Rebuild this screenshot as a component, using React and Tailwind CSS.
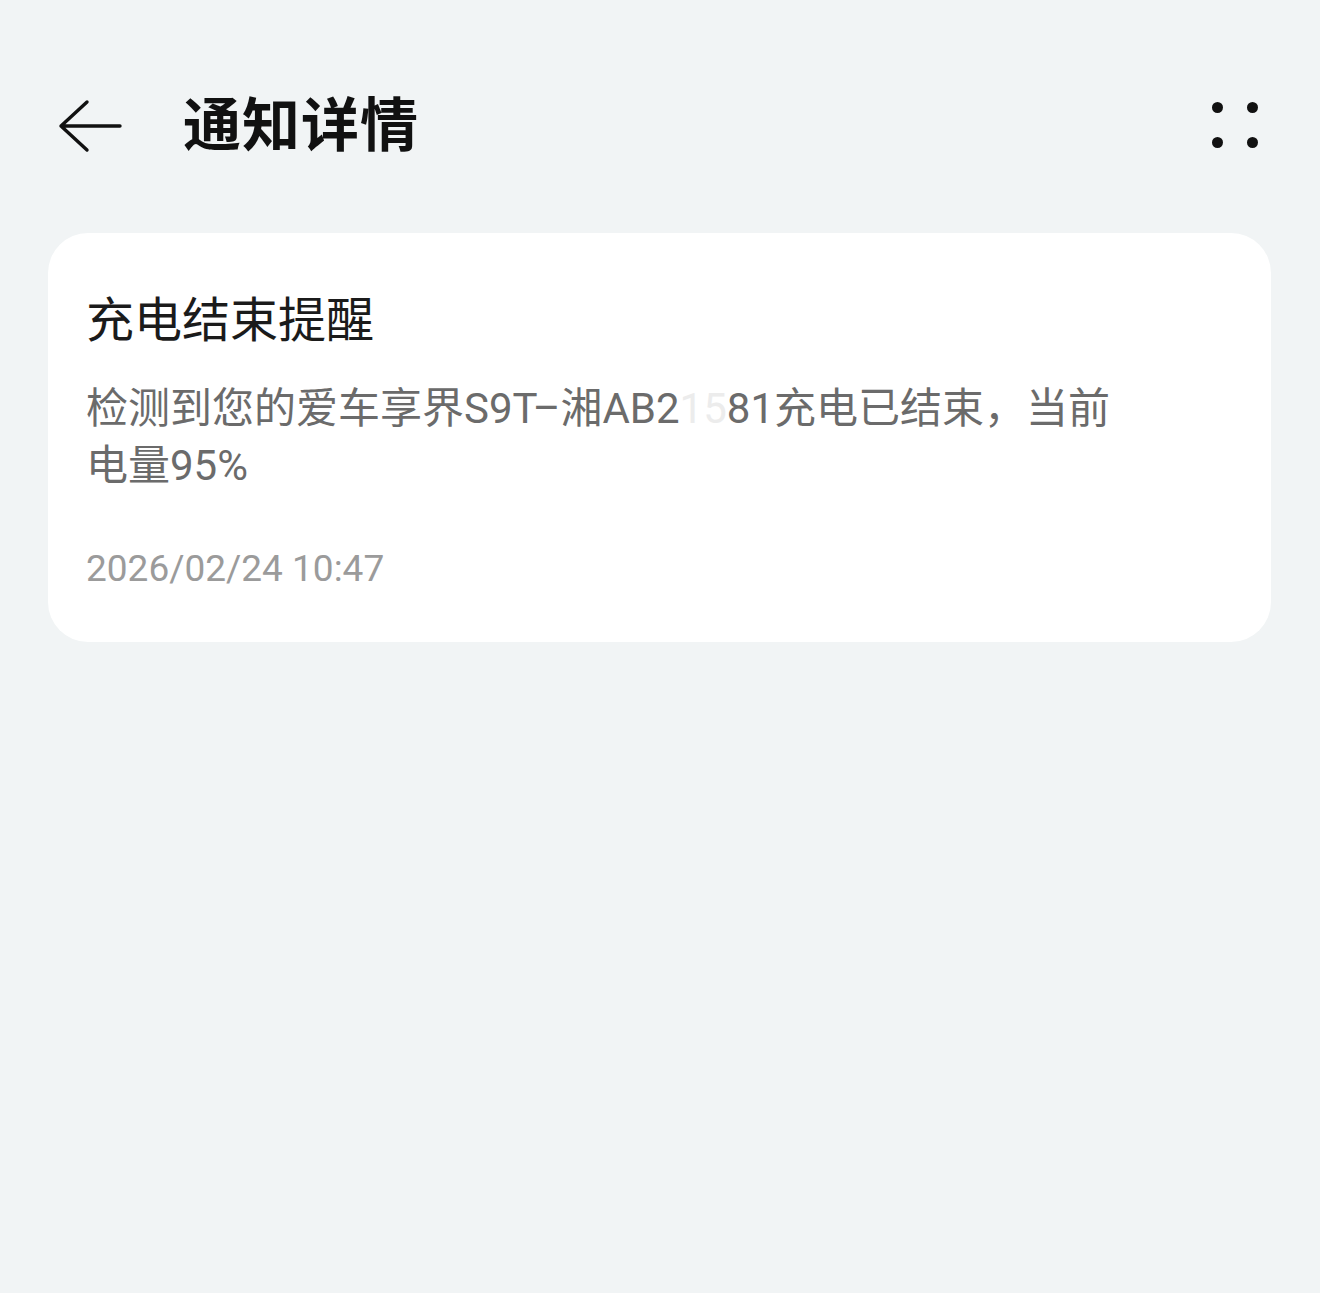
export default function App() {
  const font = { fontFamily: 'Roboto, "Noto Sans CJK SC", sans-serif' };
  return (
    <div className="w-[1320px] h-[1293px] bg-[#f1f4f5] overflow-hidden" style={font}>
      <div className="h-[233px] relative">
        <div className="flex items-center pt-[94px] h-[158px]">
          <svg className="ml-[58px]" width="66" height="54" viewBox="0 0 66 54" fill="none">
            <path d="M3 27 H62 M29 3 L3 27 L29 51" stroke="#111" strokeWidth="3.4" strokeLinecap="round" strokeLinejoin="round" />
          </svg>
          <div className="ml-[59px] text-[58px] font-bold text-[#111] leading-none tracking-[1px]">通知详情</div>
          <div className="ml-auto mr-[62px] -mt-[3px] grid grid-cols-2 gap-x-[24px] gap-y-[24px]">
            <span className="w-[11px] h-[11px] rounded-full bg-[#111]" />
            <span className="w-[11px] h-[11px] rounded-full bg-[#111]" />
            <span className="w-[11px] h-[11px] rounded-full bg-[#111]" />
            <span className="w-[11px] h-[11px] rounded-full bg-[#111]" />
          </div>
        </div>
      </div>
      <div className="mx-[48px] w-[1223px] bg-white rounded-[40px] pl-[38px] pt-[59px] pb-[51px]">
        <div className="text-[48px] leading-[58px] text-[#1b1b1b]">充电结束提醒</div>
        <div className="mt-[30px] text-[42px] leading-[57px] text-[#6b6b6b]">
          检测到您的爱车享界S9T–湘AB2<span className="text-[#ececec]">15</span>81充电已结束，当前
          <br />
          电量95%
        </div>
        <div className="mt-[53px] text-[37px] leading-[44px] text-[#9b9b9b]">2026/02/24 10:47</div>
      </div>
    </div>
  );
}
